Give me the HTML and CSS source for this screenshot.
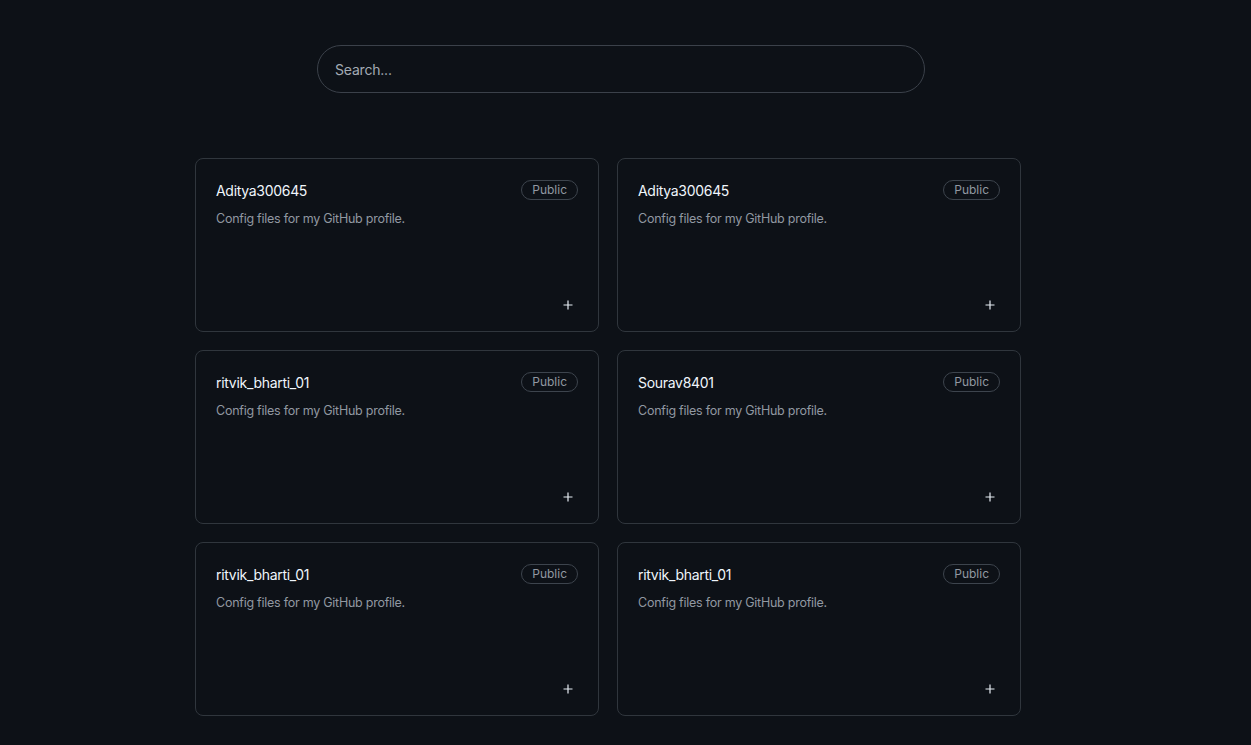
FILE: index.html
```html
<!DOCTYPE html>
<html>
<head>
<meta charset="utf-8">
<link rel="stylesheet" href="styles.css">
</head>
<body>
<div class="page">
  <div class="search-wrap">
    <input class="search" type="text" placeholder="Search...">
  </div>
  <div class="grid">
    <div class="card">
      <div class="card-head"><span class="name">Aditya300645</span><span class="badge">Public</span></div>
      <p class="desc">Config files for my GitHub profile.</p>
      <div class="card-foot"><svg class="plus" width="12" height="12" viewBox="0 0 12 12"><path d="M6 1.5v9M1.5 6h9" stroke="#e6edf3" stroke-width="1.2" fill="none"/></svg></div>
    </div>
    <div class="card">
      <div class="card-head"><span class="name">Aditya300645</span><span class="badge">Public</span></div>
      <p class="desc">Config files for my GitHub profile.</p>
      <div class="card-foot"><svg class="plus" width="12" height="12" viewBox="0 0 12 12"><path d="M6 1.5v9M1.5 6h9" stroke="#e6edf3" stroke-width="1.2" fill="none"/></svg></div>
    </div>
    <div class="card">
      <div class="card-head"><span class="name">ritvik_bharti_01</span><span class="badge">Public</span></div>
      <p class="desc">Config files for my GitHub profile.</p>
      <div class="card-foot"><svg class="plus" width="12" height="12" viewBox="0 0 12 12"><path d="M6 1.5v9M1.5 6h9" stroke="#e6edf3" stroke-width="1.2" fill="none"/></svg></div>
    </div>
    <div class="card">
      <div class="card-head"><span class="name">Sourav8401</span><span class="badge">Public</span></div>
      <p class="desc">Config files for my GitHub profile.</p>
      <div class="card-foot"><svg class="plus" width="12" height="12" viewBox="0 0 12 12"><path d="M6 1.5v9M1.5 6h9" stroke="#e6edf3" stroke-width="1.2" fill="none"/></svg></div>
    </div>
    <div class="card">
      <div class="card-head"><span class="name">ritvik_bharti_01</span><span class="badge">Public</span></div>
      <p class="desc">Config files for my GitHub profile.</p>
      <div class="card-foot"><svg class="plus" width="12" height="12" viewBox="0 0 12 12"><path d="M6 1.5v9M1.5 6h9" stroke="#e6edf3" stroke-width="1.2" fill="none"/></svg></div>
    </div>
    <div class="card">
      <div class="card-head"><span class="name">ritvik_bharti_01</span><span class="badge">Public</span></div>
      <p class="desc">Config files for my GitHub profile.</p>
      <div class="card-foot"><svg class="plus" width="12" height="12" viewBox="0 0 12 12"><path d="M6 1.5v9M1.5 6h9" stroke="#e6edf3" stroke-width="1.2" fill="none"/></svg></div>
    </div>
  </div>
</div>
</body>
</html>
```

FILE: styles.css
```css
html, body {
  margin: 0;
  padding: 0;
  background: #0d1117;
  font-family: Inter, "Noto Sans", sans-serif;
  height: 100%;
  overflow: hidden;
}
.page {
  padding-top: 45px;
}
.search-wrap {
  margin-left: 317px;
  width: 608px;
}
.search {
  box-sizing: border-box;
  width: 608px;
  height: 48px;
  border: 1px solid #3b414a;
  border-radius: 24px;
  background: #0d1117;
  color: #e6edf3;
  padding: 0 17px;
  font-family: Inter, "Noto Sans", sans-serif;
  font-size: 14px;
  letter-spacing: -0.2px;
  outline: none;
}
.search::placeholder {
  color: #a3abb4;
}
.grid {
  margin-top: 65px;
  margin-left: 195px;
  width: 826px;
  display: grid;
  grid-template-columns: 404px 404px;
  column-gap: 18px;
  row-gap: 18px;
}
.card {
  box-sizing: border-box;
  height: 174px;
  border: 1px solid #30363d;
  border-radius: 8px;
  padding: 21px 21px 20px 20px;
  display: flex;
  flex-direction: column;
}
.card-head {
  display: flex;
  align-items: center;
  justify-content: space-between;
  height: 20px;
}
.name {
  color: #f0f6fc;
  font-size: 14px;
  letter-spacing: -0.3px;
}
.badge {
  box-sizing: border-box;
  height: 20px;
  padding: 0 10px;
  border: 1px solid #3d444d;
  border-radius: 10px;
  color: #9198a1;
  font-size: 12px;
  line-height: 18px;
  margin-right: -1px;
}
.desc {
  margin: 9px 0 0;
  color: #9198a1;
  font-size: 12.5px;
  line-height: 20px;
  letter-spacing: -0.25px;
}
.card-foot {
  margin-top: auto;
  display: flex;
  justify-content: flex-end;
  padding-right: 3px;
}
.plus {
  display: block;
}
```
